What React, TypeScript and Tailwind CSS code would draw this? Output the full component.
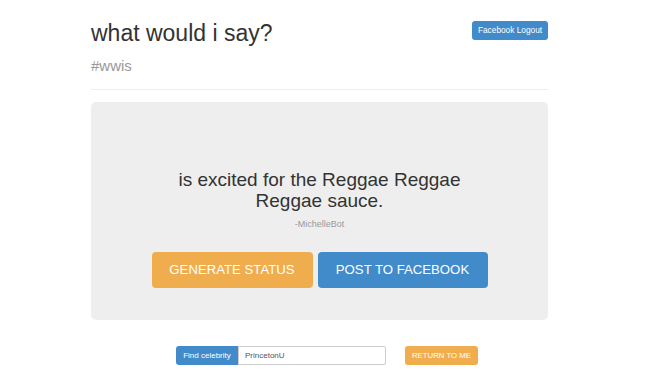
import React from "react";

export default function App() {
  return (
    <div className="w-[650px] h-[384px] bg-white overflow-hidden" style={{ fontFamily: '"Liberation Sans", Arial, sans-serif' }}>
      <div className="ml-[91px] w-[457px] pt-[20px]">
        <div className="flex items-start justify-between">
          <h1 className="text-[23px] leading-[26px] text-[#333333] font-normal">what would i say?</h1>
          <button className="mt-[1px] h-[19px] w-[76px] rounded-[3px] bg-[#428bca] text-white text-[8.3px] leading-[19px] text-center">
            Facebook Logout
          </button>
        </div>
        <div className="mt-[11px] text-[15px] leading-[17px] text-[#999999]">#wwis</div>
        <div className="mt-[15px] border-t border-[#eeeeee]"></div>
        <div className="mt-[12px] h-[218px] rounded-[5px] bg-[#eeeeee] pt-[67px] flex flex-col items-center">
          <div className="w-[337px] text-center text-[19px] leading-[21px] text-[#333333]">
            is excited for the Reggae Reggae Reggae sauce.
          </div>
          <div className="mt-[8px] text-[9px] leading-[11px] text-[#999999]">-MichelleBot</div>
          <div className="mt-[22px] flex gap-[5px]">
            <button className="h-[36px] w-[161px] rounded-[4px] bg-[#f0ad4e] text-white text-[13.2px] text-center">
              GENERATE STATUS
            </button>
            <button className="h-[36px] w-[170px] rounded-[4px] bg-[#428bca] text-white text-[13.2px] text-center">
              POST TO FACEBOOK
            </button>
          </div>
        </div>
        <div className="mt-[26px] ml-[85px] flex items-center">
          <div className="flex h-[19px]">
            <div className="w-[62px] h-[19px] rounded-l-[3px] bg-[#428bca] text-white text-[8px] leading-[19px] text-center">
              Find celebrity
            </div>
            <div className="w-[148px] h-[19px] border border-[#cccccc] rounded-r-[2px] bg-white text-[8px] leading-[17px] text-[#555555] pl-[6px]">
              PrincetonU
            </div>
          </div>
          <button className="ml-[19px] h-[19px] w-[73px] rounded-[3px] bg-[#f0ad4e] text-white text-[7.8px] leading-[19px] text-center">
            RETURN TO ME
          </button>
        </div>
      </div>
    </div>
  );
}
